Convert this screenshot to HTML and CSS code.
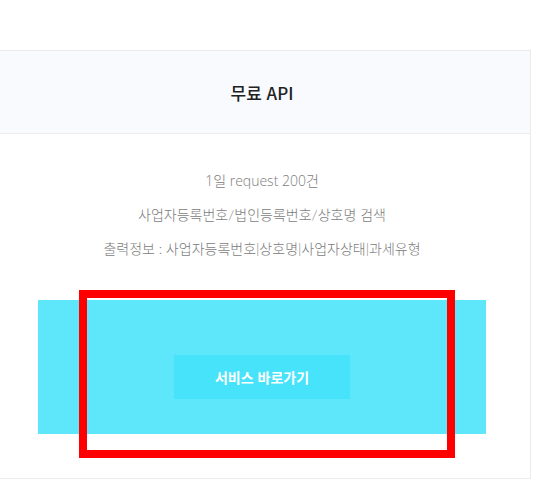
FILE: index.html
```html
<!DOCTYPE html>
<html lang="ko">
<head>
<meta charset="utf-8">
<link rel="stylesheet" href="styles.css">
</head>
<body>
<div class="card">
  <div class="card-head">무료 API</div>
  <div class="card-body">
    <p class="line line-latin">1일 request 200건</p>
    <p class="line">사업자등록번호/법인등록번호/상호명 검색</p>
    <p class="line">출력정보 : 사업자등록번호|상호명|사업자상태|과세유형</p>
    <div class="cta">
      <a class="btn">서비스 바로가기</a>
    </div>
  </div>
</div>
<div class="highlight"></div>
</body>
</html>
```
FILE: styles.css
```css
html, body {
  margin: 0;
  padding: 0;
  background: #ffffff;
}
body {
  position: relative;
  width: 546px;
  height: 487px;
  overflow: hidden;
  font-family: "Lato", "Noto Sans CJK KR", sans-serif;
}
.card {
  box-sizing: border-box;
  width: 538px;
  margin: 50px 0 0 -7px;
  border: 1px solid #ebebeb;
  background: #fff;
}
.card-head {
  height: 82px;
  display: flex;
  align-items: center;
  justify-content: center;
  background: #f9fafd;
  border-bottom: 1px solid #ececec;
  font-family: "Noto Sans CJK KR", sans-serif;
  font-size: 17px;
  font-weight: 500;
  color: #222;
}
.card-body {
  padding: 30px 44px 44px;
  text-align: center;
}
.line {
  margin: 0;
  line-height: 34px;
  font-size: 14px;
  color: #7c7c7c;
  font-weight: 300;
}
.line-latin {
  font-family: "Open Sans", "Noto Sans CJK KR", sans-serif;
}
.cta {
  margin-top: 34px;
  height: 134px;
  box-sizing: border-box;
  padding-top: 55px;
  background: #5ee6fb;
  display: flex;
  justify-content: center;
  align-items: flex-start;
}
.btn {
  width: 176px;
  height: 44px;
  display: flex;
  align-items: center;
  justify-content: center;
  background: #46e3fa;
  color: #fff;
  font-family: "Noto Sans CJK KR", sans-serif;
  font-size: 14px;
  font-weight: 700;
}
.highlight {
  position: absolute;
  left: 79px;
  top: 290px;
  width: 376px;
  height: 168px;
  box-sizing: border-box;
  border: 8px solid #ff0000;
}
```
